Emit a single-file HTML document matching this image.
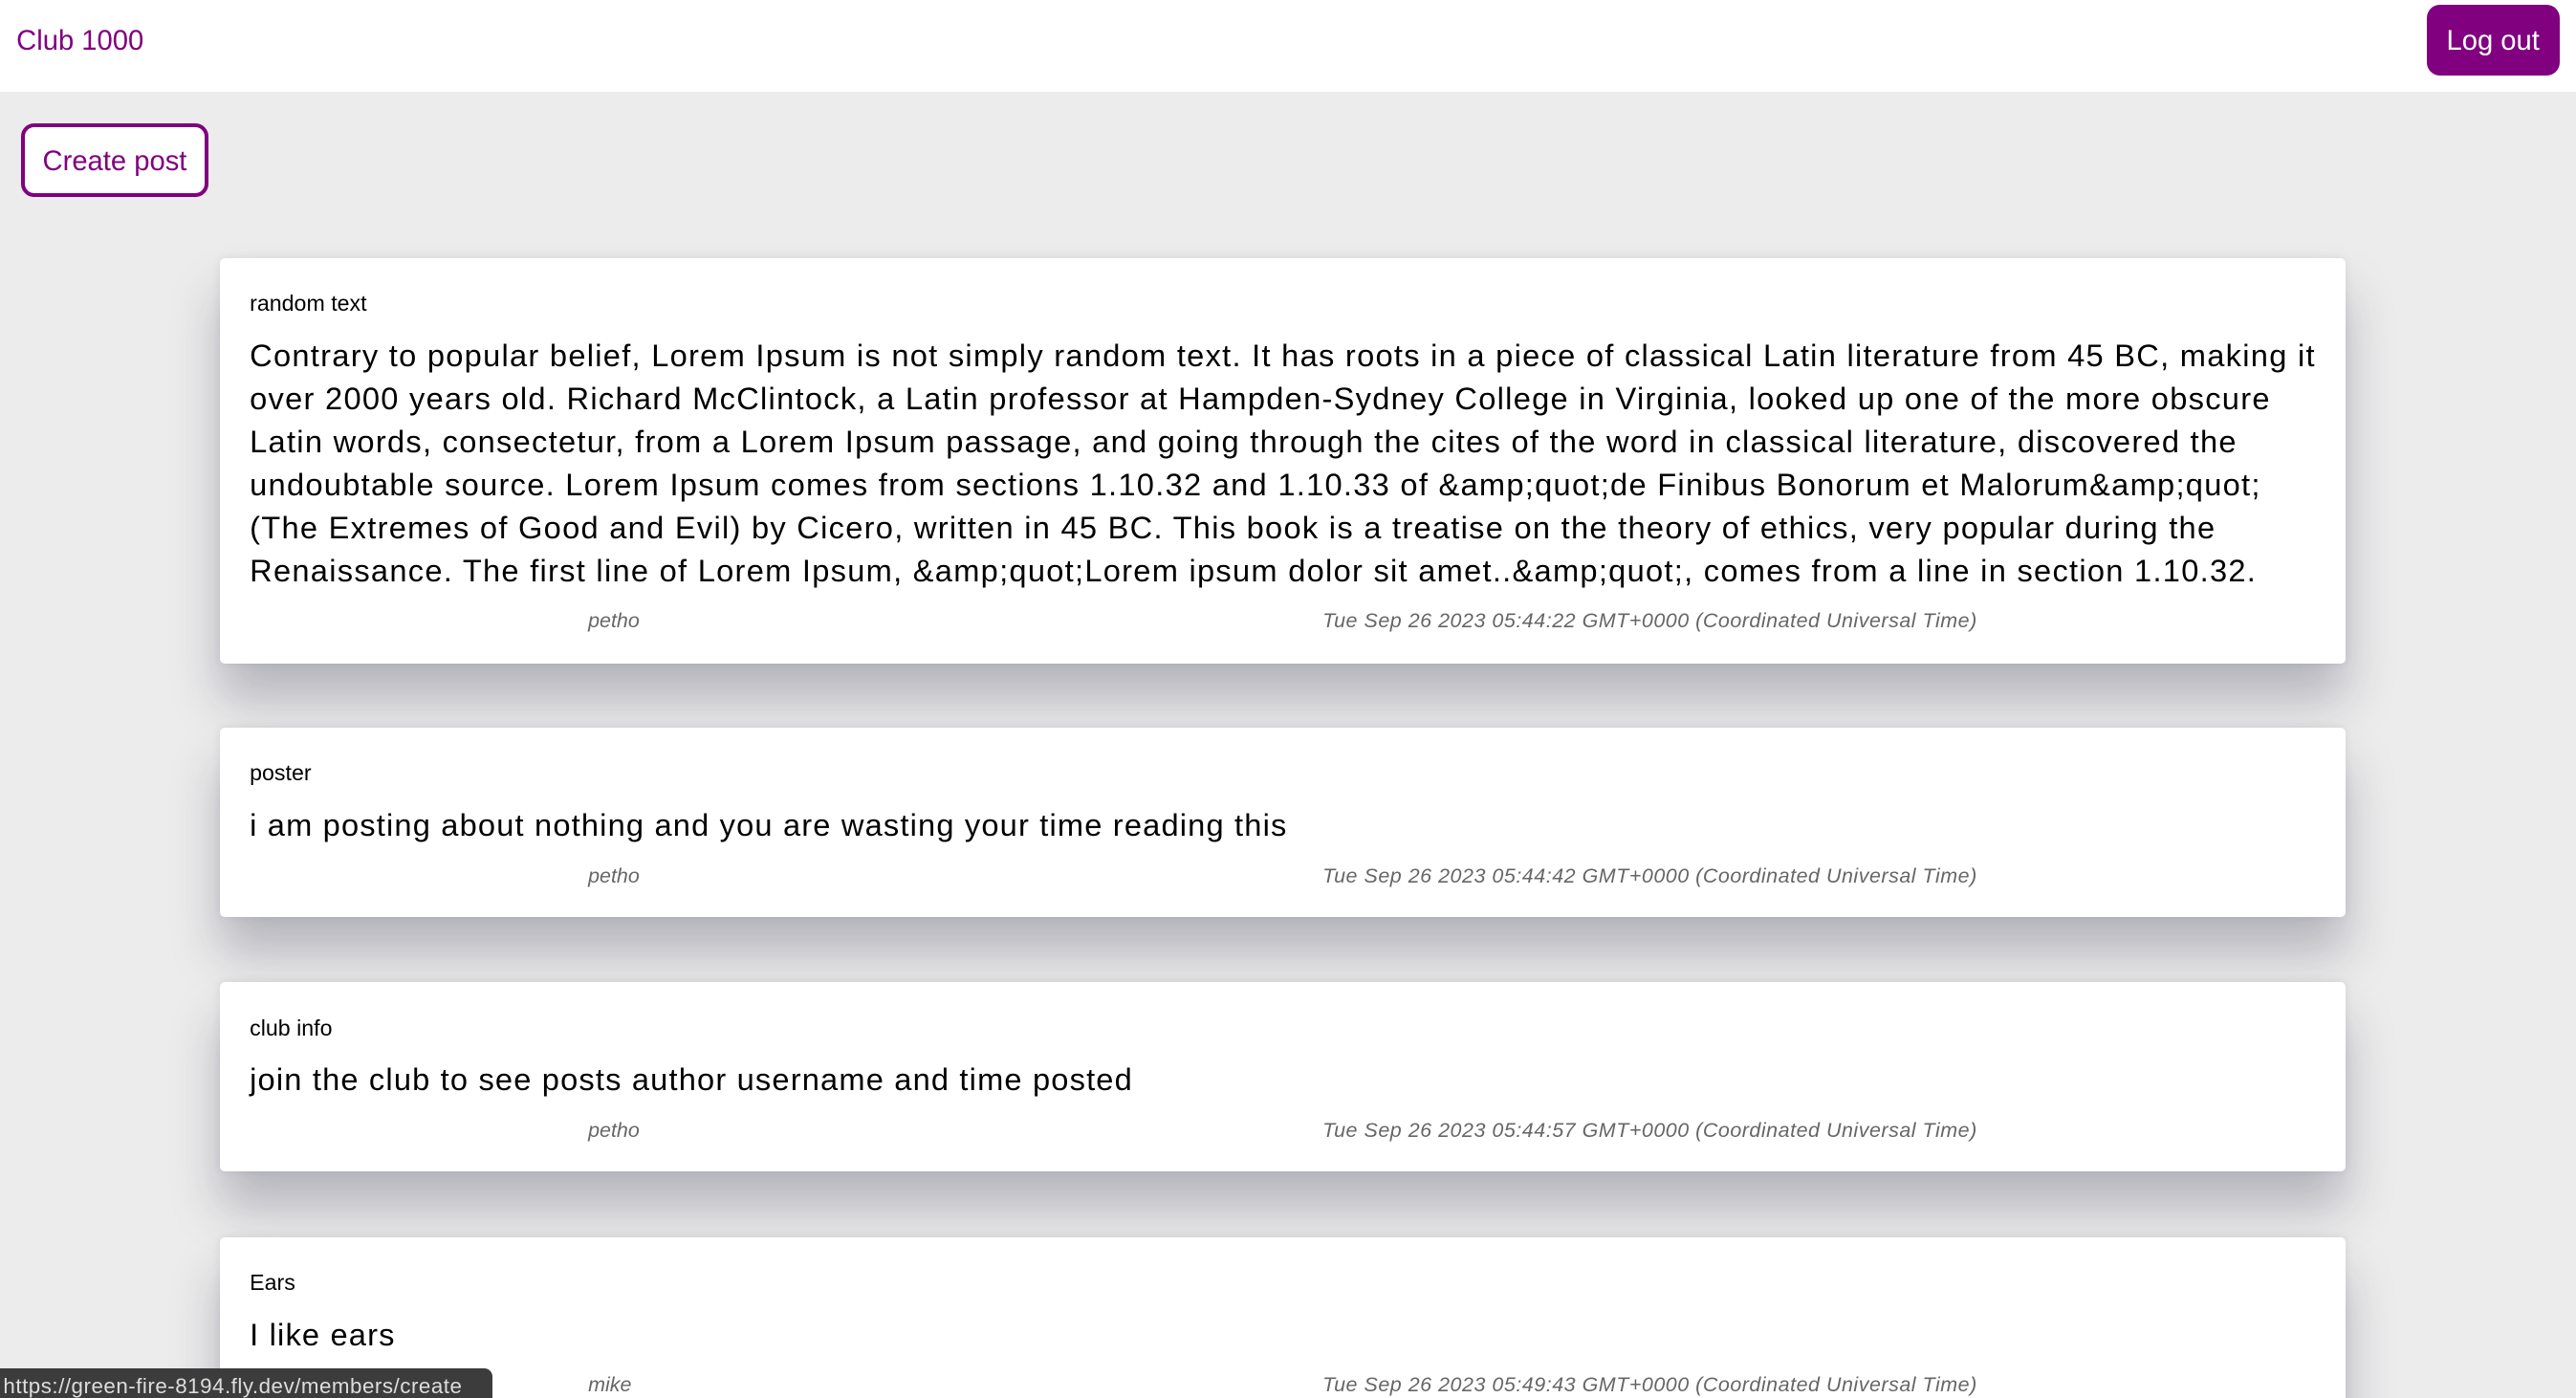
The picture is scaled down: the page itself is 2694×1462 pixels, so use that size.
<!DOCTYPE html>
<html><head><meta charset="utf-8"><style>
html,body{margin:0;padding:0;width:2694px;height:1462px;overflow:hidden;background:#ededed;}
#z{zoom:1.7181;width:1568px;height:851px;position:relative;font-family:"Liberation Sans",sans-serif;overflow:hidden;background:#ececec;}
.hdr{position:absolute;left:0;top:0;width:1568px;height:56px;background:#fff;}
.logo{position:absolute;left:10px;top:16px;font-size:17px;color:#800080;}
.logout{position:absolute;left:1477px;top:3px;width:81px;height:43px;background:#800080;border-radius:8px;color:#fff;font-size:17px;line-height:45px;text-align:center;}
.create{position:absolute;left:13px;top:75px;width:109px;height:40px;border:2.5px solid #800080;border-radius:8px;background:#fff;color:#800080;font-size:17px;line-height:42px;text-align:center;}
.card{position:absolute;left:134px;width:1294px;background:#fff;border-radius:3px;box-shadow:0 22px 30px rgba(40,40,70,.28),0 0 6px rgba(0,0,0,.08);}
.t{position:absolute;left:18px;font-size:13.5px;color:#000;}
.b{position:absolute;left:18px;font-size:19px;line-height:26.2px;color:#000;white-space:nowrap;letter-spacing:.68px;}
.m{position:absolute;font-size:12.5px;color:#666;font-style:italic;white-space:nowrap;}
.u{left:224px}.d{left:671px;letter-spacing:.3px}
.status{position:absolute;left:0;top:833px;width:300px;height:20px;background:#3c3c3c;border-top-right-radius:5px;color:#ddd;font-size:13px;line-height:22px;padding-left:2px;box-sizing:border-box;white-space:nowrap;overflow:hidden;letter-spacing:.3px;}
</style></head><body><div id="z">
<div class="hdr"><div class="logo">Club 1000</div><div class="logout">Log out</div></div>
<div class="create">Create post</div>

<div class="card" style="top:157px;height:247px;">
<div class="t" style="top:20px">random text</div>
<div class="b" style="top:46px;letter-spacing:.74px">Contrary to popular belief, Lorem Ipsum is not simply random text. It has roots in a piece of classical Latin literature from 45 BC, making it<br>over 2000 years old. Richard McClintock, a Latin professor at Hampden-Sydney College in Virginia, looked up one of the more obscure<br>Latin words, consectetur, from a Lorem Ipsum passage, and going through the cites of the word in classical literature, discovered the<br>undoubtable source. Lorem Ipsum comes from sections 1.10.32 and 1.10.33 of &amp;amp;quot;de Finibus Bonorum et Malorum&amp;amp;quot;<br>(The Extremes of Good and Evil) by Cicero, written in 45 BC. This book is a treatise on the theory of ethics, very popular during the<br>Renaissance. The first line of Lorem Ipsum, &amp;amp;quot;Lorem ipsum dolor sit amet..&amp;amp;quot;, comes from a line in section 1.10.32.</div>
<div class="m u" style="top:214px">petho</div><div class="m d" style="top:214px">Tue Sep 26 2023 05:44:22 GMT+0000 (Coordinated Universal Time)</div>
</div>

<div class="card" style="top:443px;height:115px;">
<div class="t" style="top:20px">poster</div>
<div class="b" style="top:46px">i am posting about nothing and you are wasting your time reading this</div>
<div class="m u" style="top:83px">petho</div><div class="m d" style="top:83px">Tue Sep 26 2023 05:44:42 GMT+0000 (Coordinated Universal Time)</div>
</div>

<div class="card" style="top:598px;height:115px;">
<div class="t" style="top:20px">club info</div>
<div class="b" style="top:46px">join the club to see posts author username and time posted</div>
<div class="m u" style="top:83px">petho</div><div class="m d" style="top:83px">Tue Sep 26 2023 05:44:57 GMT+0000 (Coordinated Universal Time)</div>
</div>

<div class="card" style="top:753px;height:115px;">
<div class="t" style="top:20px">Ears</div>
<div class="b" style="top:46px">I like ears</div>
<div class="m u" style="top:83px">mike</div><div class="m d" style="top:83px">Tue Sep 26 2023 05:49:43 GMT+0000 (Coordinated Universal Time)</div>
</div>

<div class="status">https://green-fire-8194.fly.dev/members/create</div>
</div></body></html>
